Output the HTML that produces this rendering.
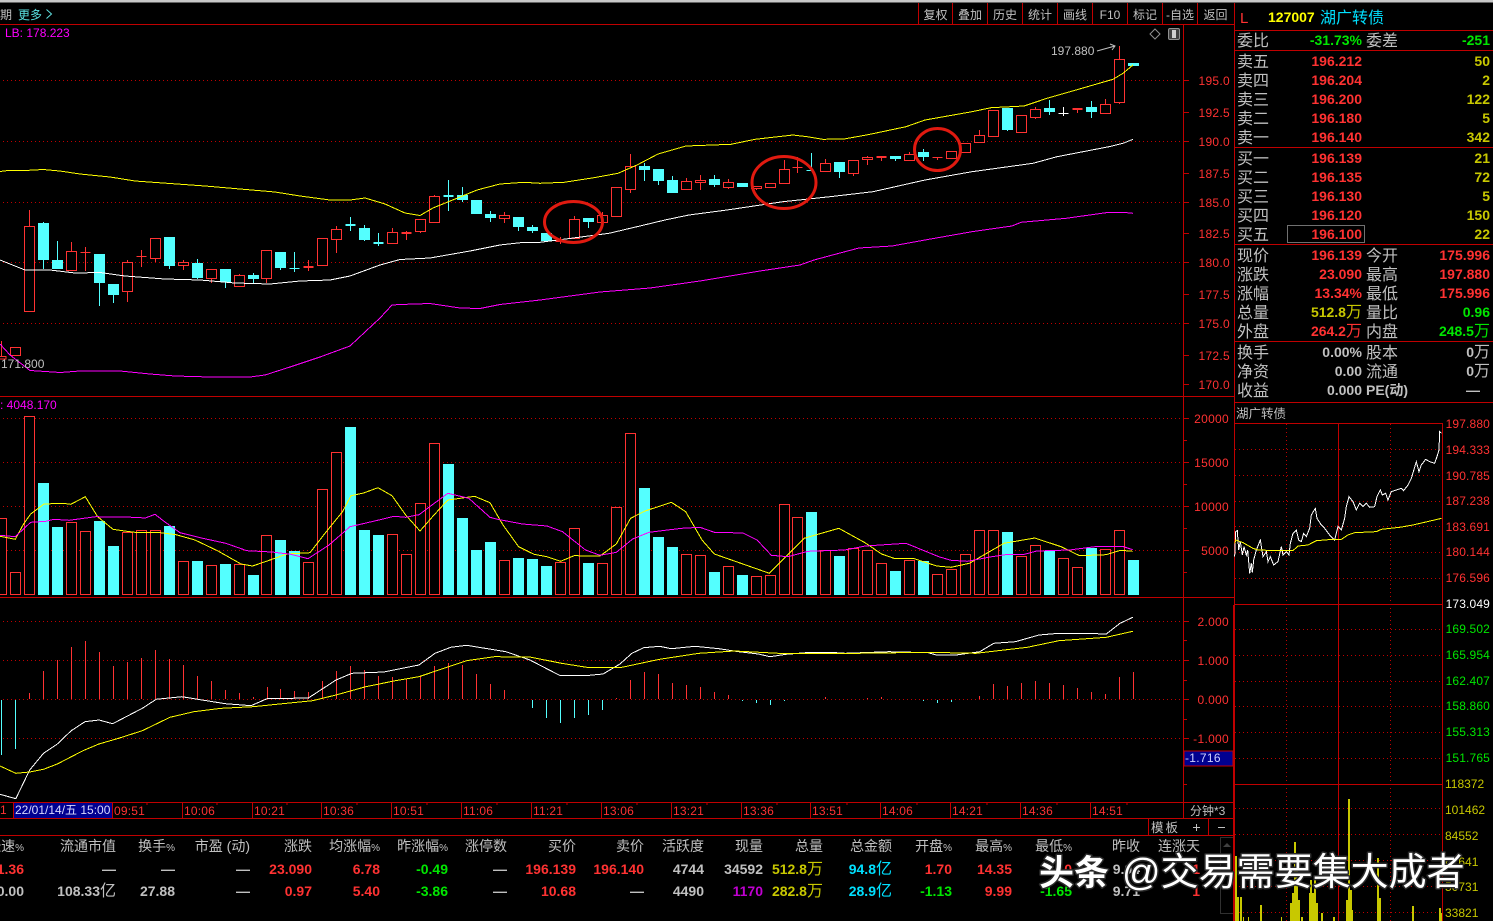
<!DOCTYPE html>
<html><head><meta charset="utf-8"><style>
html,body{margin:0;padding:0;background:#000;width:1493px;height:921px;overflow:hidden}
svg{display:block}
text{font-family:"Liberation Sans","WenQuanYi Zen Hei","Noto Sans CJK SC",sans-serif}
.ax{font-size:12px;text-anchor:end;fill:#ff3232;letter-spacing:.3px}
.t{font-size:12px;fill:#ff3232;letter-spacing:.2px}
.cn{font-size:16px;fill:#c0c0c0}
.v{font-size:14px;font-weight:bold;text-anchor:end}
.h{font-size:14px;fill:#c0c0c0;text-anchor:end}
.h tspan{font-size:10px}
.b{font-size:12px;fill:#c0c0c0;text-anchor:middle}
.r{fill:#ff3232}.g{fill:#00e600}.y{fill:#c8c800}.w{fill:#c0c0c0}.c{fill:#00e0ff}
.gd{stroke:#c00000;stroke-width:1;stroke-dasharray:1 3;fill:none;shape-rendering:crispEdges}
.ln{stroke:#c00000;stroke-width:1;fill:none;shape-rendering:crispEdges}
.ml{fill:none;stroke-width:1;shape-rendering:crispEdges}
.cr{shape-rendering:crispEdges}
</style></head><body>
<svg width="1493" height="921" viewBox="0 0 1493 921" xmlns="http://www.w3.org/2000/svg">
<rect width="1493" height="921" fill="#000"/>
<rect width="1493" height="2.5" fill="#c8c8c8"/>

<!-- grid dotted -->
<path class="gd" d="M3 80.5H1183M3 141.5H1183M3 202.5H1183M3 262.5H1183M3 323.5H1183M3 418.5H1183M3 462.5H1183M3 506.5H1183M3 550.5H1183M3 621.5H1183M3 660.5H1183M3 699.5H1183M3 738.5H1183"/>
<!-- frame lines -->
<path class="ln" d="M0 24.5H1234M0 396.5H1234M0 597.5H1234M0 802.5H1234M0 818.5H1234M0 835.5H1234M1183.5 25V818M1234.5 3V921M918.5 3V24M952.5 3V24M987.5 3V24M1022.5 3V24M1057.5 3V24M1092.5 3V24M1127.5 3V24M1162.5 3V24M1197.5 3V24M13.5 802V818M112.5 802V818M182.5 802V818M252.5 802V818M321.5 802V818M391.5 802V818M461.5 802V818M531.5 802V818M601.5 802V818M671.5 802V818M741.5 802V818M810.5 802V818M880.5 802V818M950.5 802V818M1020.5 802V818M1090.5 802V818M1148.5 819V835M1208.5 819V835"/>
<!-- axis ticks -->
<path class="ln" d="M1184 80.5h5M1184 112.5h5M1184 141.5h5M1184 173.5h5M1184 202.5h5M1184 233.5h5M1184 262.5h5M1184 294.5h5M1184 323.5h5M1184 355.5h5M1184 384.5h5M1184 418.5h5M1184 440.5h3M1184 462.5h5M1184 484.5h3M1184 506.5h5M1184 528.5h3M1184 550.5h5M1184 572.5h3M1184 621.5h5M1184 640.5h3M1184 660.5h5M1184 680.5h3M1184 699.5h5M1184 719.5h3M1184 738.5h5M1184 784.5h3M147 802v3M217 802v3M287 802v3M357 802v3M427 802v3M497 802v3M567 802v3M637 802v3M707 802v3M777 802v3M847 802v3M917 802v3M987 802v3M1057 802v3M1127 802v3"/>

<!-- toolbar -->
<text x="0" y="19" font-size="12" fill="#c0c0c0">期</text>
<text x="18" y="19" font-size="12" fill="#5ae0e0">更多</text>
<path d="M46.5 9.5l5 4.5-5 4.5" fill="none" stroke="#60e0e0"/>
<text class="b" x="935.5" y="19">复权</text><text class="b" x="970" y="19">叠加</text><text class="b" x="1005" y="19">历史</text><text class="b" x="1040" y="19">统计</text><text class="b" x="1075" y="19">画线</text><text class="b" x="1110" y="19">F10</text><text class="b" x="1145" y="19">标记</text><text class="b" x="1180" y="19">-自选</text><text class="b" x="1215.5" y="19">返回</text>
<text x="5" y="37" font-size="12" fill="#ff00ff">LB: 178.223</text>
<path d="M1155 29l5 5-5 5-5-5z" fill="none" stroke="#909090"/>
<rect x="1168.5" y="28.5" width="11" height="11" rx="1.5" fill="#404040" stroke="#909090"/><rect x="1172" y="30" width="4" height="8" fill="#d0d0d0"/>

<!-- candles: hollow red -->
<g fill="#000" stroke="#ff3232" stroke-width="1" class="cr">
<path d="M1.5 341V356M-4 356.5h10v2.5h-10zM10.5 347.5h10v8h-10zM29.5 210V226M24.5 226.5h10v85h-10zM71.5 242V251M66.5 251.5h10v19h-10zM85.5 247V271M80.5 252.5h10M127.5 260V262M127.5 292V302M122.5 262.5h10v29h-10zM141.5 250V267M136.5 256.5h10M150.5 238.5h10v20h-10zM155.5 259V262M183.5 260V262M183.5 266V270M178.5 262.5h10v3h-10zM211.5 269V270M211.5 279V283M206.5 269.5h10v9h-10zM239.5 274V275M234.5 275.5h10v11h-10zM261.5 250.5h10v28h-10zM266.5 279V283M308.5 260V271M303.5 266.5h10M303.5 267.5h10M317.5 238.5h10v27h-10zM336.5 226V229M336.5 240V253M331.5 229.5h10v10h-10zM392.5 228V232M387.5 232.5h10v11h-10zM406.5 231V240M401.5 232.5h10M401.5 233.5h10M415.5 219.5h10v12h-10zM420.5 232V233M434.5 195V196M429.5 196.5h10v26h-10zM504.5 212V215M504.5 219V223M499.5 215.5h10v3h-10zM560.5 237V244M555.5 240.5h10M555.5 241.5h10M574.5 216V219M569.5 219.5h10v19h-10zM602.5 212V215M597.5 215.5h10v7h-10zM611.5 187.5h10v29h-10zM630.5 154V166M630.5 190V193M625.5 166.5h10v23h-10zM686.5 178V181M681.5 181.5h10v8h-10zM700.5 175V180M700.5 183V190M695.5 180.5h10v2h-10zM728.5 179V182M728.5 188V189M723.5 182.5h10v5h-10zM756.5 189V190M751.5 186.5h10v2h-10zM765.5 183.5h10v4h-10zM784.5 160V169M779.5 169.5h10v14h-10zM797.5 157V173M792.5 167.5h10M825.5 159V163M820.5 163.5h10v8h-10zM848.5 160.5h10v13h-10zM853.5 174V176M867.5 156V157M867.5 160V165M862.5 157.5h10v2h-10zM881.5 157V161M876.5 156.5h10M876.5 157.5h10M909.5 152V154M904.5 154.5h10v6h-10zM937.5 157V160M932.5 157.5h10M946.5 151.5h10v7h-10zM960.5 143.5h10v9h-10zM979.5 130V135M974.5 135.5h10v7h-10zM988.5 110.5h10v26h-10zM1016.5 115.5h10v17h-10zM1035.5 107V109M1035.5 118V119M1030.5 109.5h10v8h-10zM1077.5 110V113M1072.5 108.5h10M1072.5 109.5h10M1105.5 99V104M1100.5 104.5h10v9h-10zM1119.5 46V59M1119.5 103V104M1114.5 59.5h10v43h-10z"/>
</g>
<!-- candles: cyan -->
<path class="cr" stroke="#54ffff" stroke-width="1" fill="none" d="M43.5 222V269M57.5 241V269M99.5 254V306M113.5 284V303M169.5 237V269M197.5 259V279M225.5 269V288M253.5 273V284M280.5 252V270M294.5 252V272M289.5 268.5h10M350.5 217V231M345.5 224.5h10M345.5 225.5h10M364.5 225V241M378.5 233V246M373.5 242.5h10M373.5 243.5h10M448.5 180V211M443.5 195.5h10M443.5 196.5h10M462.5 187V202M476.5 200V214M490.5 211V222M518.5 217V231M532.5 225V233M546.5 233V241M588.5 218V228M644.5 163V181M658.5 169V185M672.5 176V193M714.5 175V187M742.5 183V187M811.5 153V171M806.5 170.5h5M839.5 162V178M895.5 156V161M923.5 149V161M1007.5 108V131M1049.5 100V115M1091.5 101V118M1133.5 63V66"/>
<path class="cr" fill="#54ffff" d="M38 223h11v37H38zM52 260h11v9H52zM94 254h11v29H94zM108 284h11v11h-11zM164 237h11v29h-11zM192 263h11v15h-11zM220 269h11v13h-11zM248 275h11v4h-11zM275 252h11v16h-11zM359 228h11v12h-11zM457 195h11v5h-11zM471 200h11v14h-11zM485 214h11v4h-11zM513 217h11v10h-11zM527 227h11v4h-11zM541 233h11v8h-11zM583 218h11v4h-11zM639 166h11v4h-11zM653 169h11v12h-11zM667 180h11v13h-11zM709 179h11v6h-11zM737 183h11v4h-11zM834 162h11v10h-11zM890 156h11v3h-11zM918 152h11v5h-11zM1002 108h11v22h-11zM1044 108h11v4h-11zM1086 107h11v5h-11zM1128 63h11v3h-11z"/>
<path class="cr" stroke="#fff" fill="none" d="M1063.5 107V116M1058.5 113.5h10"/>

<!-- boll -->
<polyline class="ml" stroke="#ffff00" points="0,171.5 8,170.5 25,170.5 43,169.5 60,171 80,174 110,177 135,181 170,183.5 205,186 240,189 275,192 300,196 330,200 350,200 365,198 385,204 405,213 420,215.5 433,208 460,197 477,190 500,184 524,182.3 540,183.3 564,182.3 594,177.7 618,173.3 637,165 658,154 686,146 731,144.3 755,139.3 793,135 807,136.7 823,139.3 844,139 868,134.7 906,126.7 925,120 972,111.7 991,107.7 1024,106 1047,98.3 1076,90 1113,79.3 1123,73.3 1133,65"/>
<polyline class="ml" stroke="#ffffff" points="0,260 25,270 50,270 75,273 100,272.5 125,276 165,279 200,280 235,283 270,284 300,281 330,280 350,276 380,265 400,259.5 430,258 470,251 500,245 524,242.3 540,242.3 571,238.3 609,233.3 637,226.7 665,220 689,215 727,210 783,201.7 830,196.7 873,191.7 925,180 972,171.7 1033,163.3 1057,156.7 1109,146.7 1123,143.3 1133,139.3"/>
<polyline class="ml" stroke="#ff00ff" points="0,344 10,355 30,370.5 60,372.5 80,371 120,371 150,374 175,376 210,377 250,377 265,375 290,367 320,357 350,346 380,318 392,305 400,304.5 430,303.5 460,308 480,308.5 500,304.5 540,300 600,292 650,288 700,281 760,271 800,265 814,260 840,253 859,248 892,246 925,240 972,231.7 1012,226 1021,222.3 1066,218.3 1109,212.3 1123,212.3 1133,213.3"/>
<!-- red circles -->
<g fill="none" stroke="#e01a10" stroke-width="3"><ellipse cx="573.5" cy="222" rx="29" ry="20.5"/><ellipse cx="784" cy="182.5" rx="32" ry="26"/><ellipse cx="937.5" cy="149.5" rx="23" ry="21"/></g>
<text x="1051" y="55" font-size="12" fill="#c0c0c0">197.880</text>
<path d="M1097 51l18-5M1110 44l5 2-3 4" fill="none" stroke="#c0c0c0"/>
<text x="1" y="368" font-size="12" fill="#c0c0c0">171.800</text>
<!-- price axis -->
<text class="ax" x="1230" y="85">195.0</text><text class="ax" x="1230" y="117">192.5</text><text class="ax" x="1230" y="146">190.0</text><text class="ax" x="1230" y="178">187.5</text><text class="ax" x="1230" y="207">185.0</text><text class="ax" x="1230" y="238">182.5</text><text class="ax" x="1230" y="267">180.0</text><text class="ax" x="1230" y="299">177.5</text><text class="ax" x="1230" y="328">175.0</text><text class="ax" x="1230" y="360">172.5</text><text class="ax" x="1230" y="389">170.0</text>

<!-- volume -->
<text x="0" y="409" font-size="12" fill="#ff00ff">: 4048.170</text>
<g fill="#000" stroke="#ff3232" class="cr"><path d="M-5 518.5h11.5v76H-5zM10.5 572.5h10v22h-10zM24.5 416.5h10v178h-10zM66.5 522.5h10v72h-10zM80.5 531.5h10v63h-10zM122.5 532.5h10v62h-10zM136.5 530.5h10v64h-10zM150.5 530.5h10v64h-10zM178.5 561.5h10v33h-10zM206.5 565.5h10v29h-10zM234.5 564.5h10v30h-10zM261.5 535.5h10v59h-10zM303.5 562.5h10v32h-10zM317.5 489.5h10v105h-10zM331.5 452.5h10v142h-10zM387.5 534.5h10v60h-10zM401.5 554.5h10v40h-10zM415.5 503.5h10v91h-10zM429.5 443.5h10v151h-10zM499.5 560.5h10v34h-10zM555.5 562.5h10v32h-10zM569.5 528.5h10v66h-10zM597.5 563.5h10v31h-10zM611.5 507.5h10v87h-10zM625.5 433.5h10v161h-10zM681.5 554.5h10v40h-10zM695.5 555.5h10v39h-10zM723.5 566.5h10v28h-10zM751.5 576.5h10v18h-10zM765.5 575.5h10v19h-10zM779.5 504.5h10v90h-10zM792.5 517.5h10v77h-10zM820.5 550.5h10v44h-10zM848.5 548.5h10v46h-10zM862.5 550.5h10v44h-10zM876.5 563.5h10v31h-10zM904.5 560.5h10v34h-10zM932.5 574.5h10v20h-10zM946.5 569.5h10v25h-10zM960.5 554.5h10v40h-10zM974.5 530.5h10v64h-10zM988.5 530.5h10v64h-10zM1016.5 556.5h10v38h-10zM1030.5 545.5h10v49h-10zM1058.5 558.5h10v36h-10zM1072.5 567.5h10v27h-10zM1100.5 549.5h10v45h-10zM1114.5 530.5h10v64h-10z"/></g>
<path class="cr" fill="#54ffff" d="M38 483h11v112H38zM52 527h11v68H52zM94 521h11v74H94zM108 546h11v49h-11zM164 526h11v69h-11zM192 561h11v34h-11zM220 564h11v31h-11zM248 575h11v20h-11zM275 540h11v55h-11zM289 551h11v44h-11zM345 427h11v168h-11zM359 530h11v65h-11zM373 535h11v60h-11zM443 464h11v131h-11zM457 518h11v77h-11zM471 550h11v45h-11zM485 542h11v53h-11zM513 558h11v37h-11zM527 559h11v36h-11zM541 566h11v29h-11zM583 563h11v32h-11zM639 488h11v107h-11zM653 537h11v58h-11zM667 547h11v48h-11zM709 572h11v23h-11zM737 575h11v20h-11zM806 512h11v83h-11zM834 556h11v39h-11zM890 571h11v24h-11zM918 561h11v34h-11zM1002 532h11v63h-11zM1044 551h11v44h-11zM1086 548h11v47h-11zM1128 560h11v35h-11z"/>
<polyline class="ml" stroke="#ffff00" points="0,536.3 15.3,539.3 23,525 30.6,514 44,504 63,503.3 70.8,504.3 85.3,496.7 97.6,516.7 113,529.3 122.5,530.7 137.8,532.7 160.7,532.7 176,534.7 195,540 218,551 241,564 252.6,566 268,560.7 287,554 310,552.7 325,533.3 342.5,511.7 351,495.7 363.6,493 378,487.7 392,495.7 405.7,515 420,531 434,515 447.8,500 474.6,496.3 490,502.7 503,525 518.6,546.7 534,554.3 547,556.7 560.6,561.3 574,555.7 600,556 616.3,544 630.6,518.3 645,511 671.4,502.3 685.7,511.7 702,540 714.3,554 742.9,564 769.4,573.3 804,538.3 838.8,528.3 865,542.7 881.6,554 893.9,558.3 914.3,558.7 936.7,566 951,567.3 969.4,563.3 1004,543.3 1034.7,538 1061.2,546.7 1079.6,555.7 1106,554.7 1120.4,550.3 1132.7,551.3"/>
<polyline class="ml" stroke="#ff00ff" points="0,535.3 15.3,536.7 30.6,522.3 46,521.3 53.6,519.3 69,520.3 95.7,516.7 134,517.3 145.4,518 155,514.3 164.6,521.7 180,532.7 202.8,538.3 225.8,543.3 246.8,550.7 271.7,552 290.9,554.3 308,558.7 329,545 350,526.7 378.9,520 394,516.3 405.7,517.3 419,514.7 447.8,493.3 468.8,498.3 490,517.3 497.6,519.3 522.4,524 547,526 562.6,531.7 585.5,550 600,555.3 616.3,552.3 632.7,539 649,532.3 681.6,528.3 700,527.3 714.3,532.3 742.9,533 757,540 771.4,555.3 787.8,556.7 808,551.3 844.9,550 865.3,546 906,543.3 938.8,556.7 951,560.3 967.3,561.3 991.8,556.7 1008,554.3 1024.5,554.3 1036.7,551 1069.4,550 1098,546.3 1122.4,546.3 1132.7,549.7"/>
<text class="ax" x="1229" y="423">20000</text><text class="ax" x="1229" y="467">15000</text><text class="ax" x="1229" y="511">10000</text><text class="ax" x="1229" y="555">5000</text>

<!-- MACD -->
<path class="cr" fill="none" stroke="#ff3232" d="M29.5 693V699M43.5 671V699M57.5 660V699M71.5 647V699M85.5 641V699M99.5 652V699M113.5 666V699M127.5 662V699M141.5 658V699M155.5 650V699M169.5 659V699M183.5 665V699M197.5 676V699M211.5 681V699M225.5 690V699M239.5 693V699M253.5 697V699M267.5 687V699M280.5 689V699M294.5 691V699M308.5 692V699M322.5 681V699M336.5 671V699M350.5 666V699M364.5 670V699M378.5 676V699M392.5 677V699M406.5 679V699M420.5 676V699M434.5 666V699M448.5 663V699M462.5 665V699M476.5 674V699M490.5 684V699M504.5 690V699M616.5 698V699M630.5 680V699M644.5 672V699M658.5 674V699M672.5 683V699M686.5 685V699M700.5 687V699M714.5 692V699M728.5 695V699M825.5 697V699M867.5 698V699M881.5 697V699M979.5 696V699M993.5 684V699M1007.5 686V699M1021.5 683V699M1035.5 681V699M1049.5 683V699M1063.5 685V699M1077.5 688V699M1091.5 692V699M1105.5 694V699M1119.5 677V699M1133.5 672V699"/>
<path class="cr" fill="none" stroke="#54ffff" d="M1.5 700V755M15.5 700V749M532.5 700V708M546.5 700V718M560.5 700V723M574.5 700V718M588.5 700V715M602.5 700V710M742.5 700V701M756.5 700V703M770.5 700V705M784.5 700V701M923.5 700V701M937.5 700V703M951.5 700V702"/>
<polyline class="ml" stroke="#ffffff" points="0,794.3 15.8,798.7 29.7,770 43.5,753.3 57.3,744 71.2,730.7 85,721.7 98.9,720 112.7,723.7 142.3,708.3 156.2,699.3 181.9,696.7 197.7,699.3 225.4,703.7 251,705.7 267,698.7 308.4,698 336,680 352,673.3 383.6,672 419,665 435,653.3 450.8,647.3 466.6,645.3 506,651.7 529.9,660 559.5,675.3 585.2,675.7 603,674 620,664 631.9,653.3 643.7,647.7 659.5,646.3 671.4,648.7 695,646.3 718.9,648.7 738.6,651.7 758.4,654 770,656.7 786,654.3 805.8,652.7 829.6,652.3 845.4,653.3 888.9,651.7 928.4,652.7 936.3,655 956,655 979.8,651.7 993.7,643.3 1015.4,641.7 1039,635 1059,633.3 1082.6,633.3 1106.3,634 1120,623.3 1132.8,617.3"/>
<polyline class="ml" stroke="#ffff00" points="0,766 15.8,773.3 29.7,772 43.5,769.3 57.3,764 83,750.7 98.9,744 118.6,738.3 142.3,730.7 170,717.3 193.8,711.7 221.4,708.3 253,706.7 312.4,700.7 336,695 365.8,686.7 395.4,680.7 419,676.7 446.8,667.3 466.6,660.7 494.3,656.7 529.9,657 561.5,663.3 589.2,667.7 620,667.7 659.5,659.3 699,653.3 734.7,651 778.2,653.3 857.2,653.3 928.4,652.3 975.9,653.3 1027.3,647.3 1058.9,640.7 1106.3,637.3 1132.8,631.3"/>
<text class="ax" x="1229" y="626">2.000</text><text class="ax" x="1229" y="665">1.000</text><text class="ax" x="1229" y="704">0.000</text><text class="ax" x="1229" y="743">-1.000</text>
<rect x="1184" y="751" width="49" height="15" fill="#000090" stroke="#c00000"/>
<text x="1185" y="762" font-size="12" fill="#d0d0ff" letter-spacing=".3">-1.716</text>

<!-- time axis -->
<rect x="14" y="803" width="98" height="15" fill="#000090"/>
<text x="15" y="814" font-size="12" fill="#d8d8ff">22/01/14/五 15:00</text>
<text class="t" x="0" y="814">1</text><text class="t" x="114" y="815">09:51</text><text class="t" x="184" y="815">10:06</text><text class="t" x="254" y="815">10:21</text><text class="t" x="323" y="815">10:36</text><text class="t" x="393" y="815">10:51</text><text class="t" x="463" y="815">11:06</text><text class="t" x="533" y="815">11:21</text><text class="t" x="603" y="815">13:06</text><text class="t" x="673" y="815">13:21</text><text class="t" x="743" y="815">13:36</text><text class="t" x="812" y="815">13:51</text><text class="t" x="882" y="815">14:06</text><text class="t" x="952" y="815">14:21</text><text class="t" x="1022" y="815">14:36</text><text class="t" x="1092" y="815">14:51</text>
<text x="1190" y="815" font-size="12" fill="#c0c0c0">分钟*3</text>
<text x="1151" y="832" font-size="12.5" fill="#c0c0c0" letter-spacing="2">模板</text>
<path class="cr" d="M1193 827.5h7M1196.5 824v7M1218 827.5h7" stroke="#c0c0c0" fill="none"/>

<!-- table -->
<text class="h" x="24" y="851">涨速<tspan>%</tspan></text><text class="h" x="116" y="851">流通市值</text><text class="h" x="175" y="851">换手<tspan>%</tspan></text><text class="h" x="250" y="851">市盈 (动)</text><text class="h" x="312" y="851">涨跌</text><text class="h" x="380" y="851">均涨幅<tspan>%</tspan></text><text class="h" x="448" y="851">昨涨幅<tspan>%</tspan></text><text class="h" x="507" y="851">涨停数</text><text class="h" x="576" y="851">买价</text><text class="h" x="644" y="851">卖价</text><text class="h" x="704" y="851">活跃度</text><text class="h" x="763" y="851">现量</text><text class="h" x="823" y="851">总量</text><text class="h" x="892" y="851">总金额</text><text class="h" x="952" y="851">开盘<tspan>%</tspan></text><text class="h" x="1012" y="851">最高<tspan>%</tspan></text><text class="h" x="1072" y="851">最低<tspan>%</tspan></text><text class="h" x="1140" y="851">昨收</text><text class="h" x="1200" y="851">连涨天</text>

<g class="v">
<text class="v r" x="24" y="874">-1.36</text><text class="v w" x="116" y="874">—</text><text class="v w" x="175" y="874">—</text><text class="v w" x="250" y="874">—</text><text class="v r" x="312" y="874">23.090</text><text class="v r" x="380" y="874">6.78</text><text class="v g" x="448" y="874">-0.49</text><text class="v w" x="507" y="874">—</text><text class="v r" x="576" y="874">196.139</text><text class="v r" x="644" y="874">196.140</text><text class="v w" x="704" y="874">4744</text><text class="v w" x="763" y="874">34592</text><text class="v y" x="823" y="874">512.8<tspan font-weight="normal" font-size="16">万</tspan></text><text class="v c" x="892" y="874">94.8<tspan font-weight="normal" font-size="16">亿</tspan></text><text class="v r" x="952" y="874">1.70</text><text class="v r" x="1012" y="874">14.35</text><text class="v r" x="1072" y="874">1.10</text><text class="v w" x="1140" y="874">9.04</text><text class="v r" x="1200" y="874">1</text>
<text class="v w" x="24" y="896">0.00</text><text class="v w" x="116" y="896">108.33<tspan font-weight="normal" font-size="16">亿</tspan></text><text class="v w" x="175" y="896">27.88</text><text class="v w" x="250" y="896">—</text><text class="v r" x="312" y="896">0.97</text><text class="v r" x="380" y="896">5.40</text><text class="v g" x="448" y="896">-3.86</text><text class="v w" x="507" y="896">—</text><text class="v r" x="576" y="896">10.68</text><text class="v w" x="644" y="896">—</text><text class="v w" x="704" y="896">4490</text><text class="v" fill="#c000d0" x="763" y="896">1170</text><text class="v y" x="823" y="896">282.8<tspan font-weight="normal" font-size="16">万</tspan></text><text class="v c" x="892" y="896">28.9<tspan font-weight="normal" font-size="16">亿</tspan></text><text class="v g" x="952" y="896">-1.13</text><text class="v r" x="1012" y="896">9.99</text><text class="v g" x="1072" y="896">-1.65</text><text class="v w" x="1140" y="896">9.71</text><text class="v r" x="1200" y="896">1</text>
</g>
<rect x="1220.5" y="837.5" width="13" height="76" fill="none" stroke="#303030"/>
<path d="M1227 843l4 4h-8z" fill="#404040"/>

<!-- right panel quote -->
<path class="ln" d="M1235 30.5H1493M1235 50.5H1493M1235 147.5H1493M1235 244.5H1493M1235 341.5H1493M1235 402.5H1493"/>
<text x="1240" y="23" font-size="15" fill="#ff3232">L</text>
<text x="1268" y="22" font-size="14" font-weight="bold" fill="#ffff00">127007</text>
<text x="1320" y="23" font-size="16" fill="#00e0ff">湖广转债</text>

<text class="cn" x="1237" y="46">委比</text><text class="v g" x="1362" y="45">-31.73%</text><text class="cn" x="1366" y="46">委差</text><text class="v g" x="1490" y="45">-251</text>
<text class="cn" x="1237" y="67">卖五</text><text class="v r" x="1362" y="66">196.212</text><text class="v y" x="1490" y="66">50</text>
<text class="cn" x="1237" y="86">卖四</text><text class="v r" x="1362" y="85">196.204</text><text class="v y" x="1490" y="85">2</text>
<text class="cn" x="1237" y="105">卖三</text><text class="v r" x="1362" y="104">196.200</text><text class="v y" x="1490" y="104">122</text>
<text class="cn" x="1237" y="124">卖二</text><text class="v r" x="1362" y="123">196.180</text><text class="v y" x="1490" y="123">5</text>
<text class="cn" x="1237" y="143">卖一</text><text class="v r" x="1362" y="142">196.140</text><text class="v y" x="1490" y="142">342</text>
<text class="cn" x="1237" y="164">买一</text><text class="v r" x="1362" y="163">196.139</text><text class="v y" x="1490" y="163">21</text>
<text class="cn" x="1237" y="183">买二</text><text class="v r" x="1362" y="182">196.135</text><text class="v y" x="1490" y="182">72</text>
<text class="cn" x="1237" y="202">买三</text><text class="v r" x="1362" y="201">196.130</text><text class="v y" x="1490" y="201">5</text>
<text class="cn" x="1237" y="221">买四</text><text class="v r" x="1362" y="220">196.120</text><text class="v y" x="1490" y="220">150</text>
<text class="cn" x="1237" y="240">买五</text><text class="v r" x="1362" y="239">196.100</text><text class="v y" x="1490" y="239">22</text>
<rect x="1287.5" y="225.5" width="77" height="17" fill="none" stroke="#707070"/>

<text class="cn" x="1237" y="261">现价</text><text class="v r" x="1362" y="260">196.139</text><text class="cn" x="1366" y="261">今开</text><text class="v r" x="1490" y="260">175.996</text>
<text class="cn" x="1237" y="280">涨跌</text><text class="v r" x="1362" y="279">23.090</text><text class="cn" x="1366" y="280">最高</text><text class="v r" x="1490" y="279">197.880</text>
<text class="cn" x="1237" y="299">涨幅</text><text class="v r" x="1362" y="298">13.34%</text><text class="cn" x="1366" y="299">最低</text><text class="v r" x="1490" y="298">175.996</text>
<text class="cn" x="1237" y="318">总量</text><text class="v y" x="1362" y="317">512.8<tspan font-weight="normal" font-size="16">万</tspan></text><text class="cn" x="1366" y="318">量比</text><text class="v g" x="1490" y="317">0.96</text>
<text class="cn" x="1237" y="337">外盘</text><text class="v r" x="1362" y="336">264.2<tspan font-weight="normal" font-size="16">万</tspan></text><text class="cn" x="1366" y="337">内盘</text><text class="v g" x="1490" y="336">248.5<tspan font-weight="normal" font-size="16">万</tspan></text>
<text class="cn" x="1237" y="358">换手</text><text class="v w" x="1362" y="357">0.00%</text><text class="cn" x="1366" y="358">股本</text><text class="v w" x="1490" y="357">0<tspan font-weight="normal" font-size="16">万</tspan></text>
<text class="cn" x="1237" y="377">净资</text><text class="v w" x="1362" y="376">0.00</text><text class="cn" x="1366" y="377">流通</text><text class="v w" x="1490" y="376">0<tspan font-weight="normal" font-size="16">万</tspan></text>
<text class="cn" x="1237" y="396">收益</text><text class="v w" x="1362" y="395">0.000</text><text class="v w" x="1366" y="395" text-anchor="start" style="text-anchor:start">PE(动)</text><text class="v w" x="1480" y="395">—</text>

<!-- mini intraday -->
<text x="1236" y="418" font-size="12.5" fill="#c0c0c0">湖广转债</text>
<path class="gd" d="M1235 449.5H1442M1235 475.5H1442M1235 501.5H1442M1235 526.5H1442M1235 552.5H1442M1235 578.5H1442M1235 629.5H1442M1235 655.5H1442M1235 681.5H1442M1235 706.5H1442M1235 732.5H1442M1235 758.5H1442M1235 808.5H1442M1235 834.5H1442M1235 860.5H1442M1235 886.5H1442M1235 912.5H1442M1286.5 424V921M1390.5 424V921"/>
<path class="ln" d="M1235 423.5H1442.5M1235 604.5H1442.5M1235 784.5H1442.5M1442.5 423V921M1338.5 423V921"/>
<rect x="1233" y="605" width="2" height="316" fill="#c00000"/>
<g fill="#c8c800" class="cr">
<path d="M1235 856h2v65h-2zM1237 897h2v24h-2zM1240 897h2v24h-2zM1243 917h1v4h-1zM1248 917h1v4h-1zM1260 905h2v16h-2zM1281 917h1v4h-1zM1290 903h2v18h-2zM1292 893h2v28h-2zM1294 842h2v79h-2zM1296 853h2v68h-2zM1298 900h2v21h-2zM1301 917h2v4h-2zM1309 893h2v28h-2zM1310 880h2v41h-2zM1312 893h2v28h-2zM1314 877h2v44h-2zM1316 903h2v18h-2zM1321 913h2v8h-2zM1333 917h2v4h-2zM1346 900h2v21h-2zM1348 799h2v122h-2zM1350 890h2v31h-2zM1351 910h2v11h-2zM1377 858h2v63h-2zM1379 898h2v23h-2zM1412 906h2v15h-2zM1439 908h2v13h-2zM1441 913h1v8h-1z"/>
</g>
<g transform="translate(1233 400) scale(.3333)">
<polyline fill="none" stroke="#fff" stroke-width="3" shape-rendering="crispEdges" points="5,470 8,395 13,392 17,450 22,425 28,465 33,440 40,465 44,450 50,520 55,490 58,518 62,480 70,450 82,420 90,470 100,455 105,485 112,470 122,495 135,485 145,440 150,465 160,455 168,465 172,430 180,400 190,390 197,420 205,425 212,400 220,410 230,385 235,345 247,325 252,355 265,375 275,385 290,405 305,420 315,380 325,390 335,355 340,320 348,290 360,305 370,330 380,310 390,320 400,310 410,322 425,320 432,290 442,270 448,285 458,280 465,300 475,275 490,270 505,265 512,272 525,255 535,235 550,185 558,215 565,195 578,178 590,185 605,190 612,170 618,150 620,95 626,100"/>
<polyline fill="none" stroke="#ffff00" stroke-width="3" shape-rendering="crispEdges" points="5,430 8,420 30,428 60,445 75,450 130,452 180,452 195,438 225,435 250,422 300,418 325,418 345,405 365,398 430,395 445,388 500,382 540,375 626,355"/>
</g>
<g font-size="12" text-anchor="end" letter-spacing=".15">
<text class="r" x="1490" y="428">197.880</text><text class="r" x="1490" y="454">194.333</text><text class="r" x="1490" y="480">190.785</text><text class="r" x="1490" y="505">187.238</text><text class="r" x="1490" y="531">183.691</text><text class="r" x="1490" y="556">180.144</text><text class="r" x="1490" y="582">176.596</text>
<text fill="#fff" x="1490" y="608">173.049</text>
<text class="g" x="1490" y="633">169.502</text><text class="g" x="1490" y="659">165.954</text><text class="g" x="1490" y="685">162.407</text><text class="g" x="1490" y="710">158.860</text><text class="g" x="1490" y="736">155.313</text><text class="g" x="1490" y="762">151.765</text>
</g>
<g font-size="12" fill="#c8c800">
<text x="1445" y="788">118372</text><text x="1445" y="814">101462</text><text x="1445" y="840">84552</text><text x="1445" y="866">67641</text><text x="1445" y="891">50731</text><text x="1445" y="917">33821</text>
</g>

<!-- watermark -->
<g fill="#fff" stroke="#2a2a2a" stroke-width="3" style="paint-order:stroke" stroke-linejoin="round">
<text x="1039" y="885" style="font-family:'Noto Sans CJK SC',sans-serif;font-weight:bold;font-size:35px">头条</text>
<text x="1122" y="885" style="font-family:'Liberation Sans','Noto Sans CJK SC',sans-serif;font-size:38px">@交易需要集大成者</text>
</g>
</svg>
</body></html>
